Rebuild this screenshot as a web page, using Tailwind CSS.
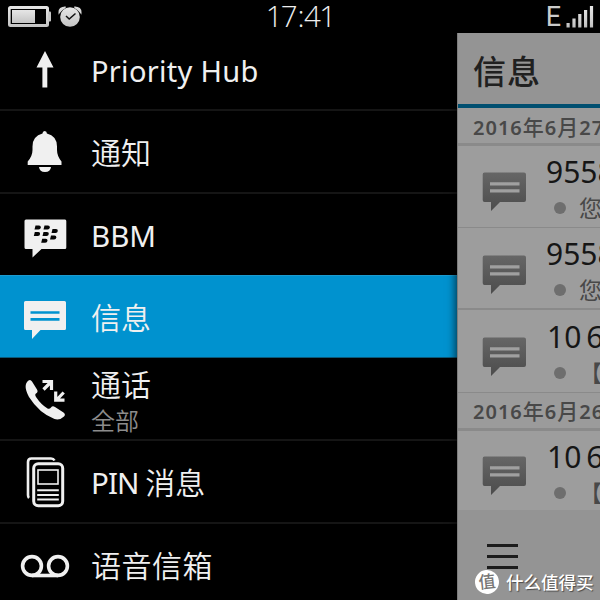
<!DOCTYPE html>
<html lang="zh-CN">
<head>
<meta charset="utf-8">
<title>信息</title>
<script src="https://cdn.jsdelivr.net/npm/@tailwindcss/browser@4"></script>
</head>
<body class="w-[600px] h-[600px] overflow-hidden bg-black font-['Noto_Sans','Noto_Sans_CJK_SC',sans-serif] text-[#f0f0f0]">
<svg class="absolute w-0 h-0">
  <defs>
    <linearGradient id="gray" x1="0" y1="0" x2="0" y2="1"><stop offset="0" stop-color="#666"/><stop offset="1" stop-color="#4c4c4c"/></linearGradient>
    <linearGradient id="silver" x1="0" y1="0" x2="0" y2="1"><stop offset="0" stop-color="#e6e6e6"/><stop offset="1" stop-color="#c4c4c4"/></linearGradient>
  </defs>
</svg>
<div class="relative flex flex-col w-[600px] h-[600px] overflow-hidden">
  <header class="h-[33px] shrink-0 grid grid-cols-3 items-start">
    <svg width="90" height="33" viewBox="0 0 90 33">
      <rect x="8" y="6" width="41" height="21" rx="2.5" fill="url(#silver)"/>
      <rect x="48" y="11.500" width="3" height="10" rx="1" fill="#c8c8c8"/>
      <rect x="10.700" y="9" width="35.300" height="15" fill="#000"/>
      <rect x="12" y="10" width="23" height="13" fill="url(#silver)"/>
      <path d="M59.200 12.500Q58.800 7.500 65.500 7.200Q61.500 9 59.200 12.500zM80.800 12.500Q81.200 7.500 74.500 7.200Q78.500 9 80.800 12.500z" fill="#d8d8d8" stroke="#d8d8d8" stroke-width="1.500"/>
      <circle cx="70" cy="17" r="9.800" fill="url(#silver)"/>
      <path d="M66 16l3.200 3 6.300-5.500" fill="none" stroke="#111" stroke-width="1.500"/>
    </svg>
    <div class="text-center font-['Open_Sans','Noto_Sans',sans-serif] font-light text-[29.500px] leading-[32px] tracking-[-1.800px] text-[#eee]">17<span class="px-[1.500px]">:</span>41</div>
    <div class="flex justify-end gap-[5px] pr-[6px]">
      <span class="font-['Roboto',sans-serif] text-[27px] leading-[33px] pt-px text-[#ccc]">E</span>
      <svg width="28" height="33" viewBox="0 0 28 33" fill="url(#silver)">
        <path d="M.5 23h3.200v4.500H.500zM6.400 18.500h3.200v9H6.400zM12.200 14h3.200v13.500h-3.200zM18 10h3.200v17.500H18zM23.900 6h3.200v21.500h-3.200z"/>
      </svg>
    </div>
  </header>

  <main class="flex flex-1 min-h-0">
    <nav class="w-[457px] shrink-0 flex flex-col text-[30px] leading-[40px] font-[350] overflow-hidden">
      <div class="h-[78px] shrink-0 flex items-center border-b-2 border-[#151515]">
        <svg class="shrink-0" width="91" height="76" viewBox="0 33 91 76"><path d="M45 51l8.500 16.500H47.300V87.500H42.400V67.500H36.500z" fill="#f0f0f0"/></svg>
        <span class="text-[29px] font-normal tracking-[0.3px]">Priority Hub</span>
      </div>
      <div class="h-[83px] shrink-0 flex items-center border-b-2 border-[#151515]">
        <svg class="shrink-0" width="91" height="81" viewBox="0 111 91 81"><path fill="#f0f0f0" d="M42.500 133.500q0-2.500 2.200-2.500t2.200 2.500Q57 136 57 146.500V150Q57 156 61.500 161.500V165H27.700V161.500Q32.500 156 32.500 150V146.500Q32.500 136 42.500 133.500zM39 167H51Q50.500 172 45 172T39 167z"/></svg>
        <span class="pt-[2px]">通知</span>
      </div>
      <div class="h-[81px] shrink-0 flex items-center">
        <svg class="shrink-0" width="91" height="81" viewBox="0 194 91 81"><path fill="#f0f0f0" d="M26 219.500H65Q66.300 219.500 66.300 221V247.500Q66.300 249 65 249H41.500L32.500 257.500V249H26Q24.500 249 24.500 247.500V221Q24.500 219.500 26 219.500z"/>
          <g fill="#050505"><path id="b" d="M35.500 225.500H39Q41 225.500 40.800 227.500T38.500 229.500H34.500z"/><use href="#b" x="9"/><use href="#b" x="-.7" y="6.500"/><use href="#b" x="8" y="6.500"/><use href="#b" x="17" y="3.500"/><use href="#b" x="15.500" y="10"/><use href="#b" x="6.700" y="13.200"/></g></svg>
        <span class="text-[29.500px] font-normal pt-[2px]">BBM</span>
      </div>
      <div class="h-[83px] shrink-0 flex items-center bg-[#0092cf] border-t border-b border-t-[#1c9bd0] border-b-[#0b5878]">
        <svg class="shrink-0" width="91" height="81" viewBox="0 276 91 81"><path fill="#f0f0f0" d="M25.500 301H64.500Q66 301 66 302.500V328.500Q66 330 64.500 330H40.500L32 339V330H25.500Q24 330 24 328.500V302.500Q24 301 25.500 301z"/><path d="M30.500 312.500H59.500M30.500 319.300H59.500" stroke="#0092cf" stroke-width="2.700"/></svg>
        <span class="pt-[2px]">信息</span>
      </div>
      <div class="h-[83px] shrink-0 flex items-center border-b-2 border-[#151515]">
        <svg class="shrink-0" width="91" height="81" viewBox="0 358 91 81">
          <path fill="#f0f0f0" d="M28.500 380.500Q30.500 379 32 381.500L37 389.500Q38.500 392 36 393.500Q34.500 394.500 36 397Q41 404.500 47.500 408.500Q49.500 409.500 51 407.500Q52.500 405.500 55 407L63.500 412.500Q66 414.500 64 416.500Q60 420.500 54.500 419Q39 413 29 397Q22.500 385 28.500 380.500z"/>
          <path d="M43.500 389.500L51 382M42.500 381.500H51.500V390M63.700 392.500L56.500 400M55.700 391.500V400.200H64.500" fill="none" stroke="#f0f0f0" stroke-width="3.200"/>
        </svg>
        <div class="flex flex-col pt-[4px]"><span class="leading-[39px]">通话</span><span class="text-[24px] leading-[33px] text-[#8c8c8c]">全部</span></div>
      </div>
      <div class="h-[83px] shrink-0 flex items-center border-b-2 border-[#151515]">
        <svg class="shrink-0" width="91" height="81" viewBox="0 441 91 81" fill="none" stroke="#f0f0f0">
          <path d="M29 498Q28 497 28 495V462Q28 458.500 31.500 458.500H51Q53.500 458.500 54.500 460.500" stroke-width="2.600"/>
          <rect x="33.700" y="463.700" width="29" height="42" rx="4.500" stroke-width="3"/>
          <rect x="38" y="470" width="20" height="14" stroke-width="1.600"/>
          <path d="M37.200 490.200H58.800M37.200 495H58.800M37.200 499.500H58.800" stroke-width="2"/>
        </svg>
        <span class="pt-[2px]"><span class="text-[29.500px] font-normal tracking-[-0.9px]">PIN </span>消息</span>
      </div>
      <div class="h-[83px] shrink-0 flex items-center">
        <svg class="shrink-0" width="91" height="81" viewBox="0 524.500 91 81" fill="none" stroke="#f0f0f0" stroke-width="3.600"><circle cx="32" cy="565.500" r="9.400"/><circle cx="58" cy="565.500" r="9.400"/><path d="M32 575H58"/></svg>
        <span class="tracking-[0.5px]">语音信箱</span>
      </div>
    </nav>

    <section class="relative w-[143px] flex flex-col bg-[#9d9d9d] overflow-hidden whitespace-nowrap border-l border-[#7d7d7d] shadow-[-2px_0_8px_rgba(0,0,0,0.6)]">
      <h1 class="h-[71px] shrink-0 bg-[#949494] pl-[15px] pt-[2px] text-[33px] leading-[73px] tracking-[1px] font-medium text-[#202020]">信息</h1>
      <div class="h-[4px] shrink-0 bg-[#004f70]"></div>
      <div class="h-[38px] shrink-0 pl-[15px] border-b-3 border-[#8a8a8a] bg-[#9b9b9b] text-[20px] leading-[38px] tracking-[1px] font-semibold text-[#484848]">2016<span class="font-medium text-[21px]">年</span>6<span class="font-medium text-[21px]">月</span>27</div>

      <div class="h-[82px] shrink-0 flex border-b border-[#8a8a8a]">
        <svg class="ml-[24px] mt-[25px] shrink-0" width="46" height="42" viewBox="0 0 46 42"><path id="chat" fill="url(#gray)" d="M2.500 1.500H42Q44 1.500 44 3.500V29Q44 31 42 31H18L9 40V31H2.500Q.7 31 .7 29V3.500Q.7 1.500 2.500 1.500z"/><path d="M8 12.800H37.500M8 19.800H37.500" stroke="#a0a0a0" stroke-width="3.200"/></svg>
        <div class="ml-[18px] flex flex-col pt-[5px]">
          <span class="text-[30px] leading-[42px] text-[#161616]">9558</span>
          <div class="flex items-center h-[30px]"><i class="w-[12px] h-[12px] rounded-full bg-[#6e6e6e] ml-[8px] mr-[13px]"></i><span class="text-[23px] leading-[30px] text-[#484848]">您</span></div>
        </div>
      </div>
      <div class="h-[82px] shrink-0 flex border-b-2 border-[#8a8a8a]">
        <svg class="ml-[24px] mt-[26px] shrink-0" width="46" height="42" viewBox="0 0 46 42"><use href="#chat"/><path d="M8 12.800H37.500M8 19.800H37.500" stroke="#a0a0a0" stroke-width="3.200"/></svg>
        <div class="ml-[18px] flex flex-col pt-[5px]">
          <span class="text-[30px] leading-[42px] text-[#161616]">9558</span>
          <div class="flex items-center h-[30px]"><i class="w-[12px] h-[12px] rounded-full bg-[#6e6e6e] ml-[8px] mr-[13px]"></i><span class="text-[23px] leading-[30px] text-[#484848]">您</span></div>
        </div>
      </div>
      <div class="h-[83px] shrink-0 flex border-b border-[#8a8a8a]">
        <svg class="ml-[24px] mt-[26px] shrink-0" width="46" height="42" viewBox="0 0 46 42"><use href="#chat"/><path d="M8 12.800H37.500M8 19.800H37.500" stroke="#a0a0a0" stroke-width="3.200"/></svg>
        <div class="ml-[17px] flex flex-col pt-[6px]">
          <span class="text-[30px] leading-[42px] text-[#161616] pl-[2px]">10<span class="pl-[5px]">6</span></span>
          <div class="flex items-center h-[30px]"><i class="w-[12px] h-[12px] rounded-full bg-[#6e6e6e] ml-[9px] mr-[13px]"></i><span class="text-[23px] leading-[30px] text-[#484848]">【</span></div>
        </div>
      </div>
      <div class="h-[38px] shrink-0 pl-[15px] border-b-3 border-[#8a8a8a] bg-[#9b9b9b] text-[20px] leading-[37px] tracking-[1px] font-semibold text-[#484848]">2016<span class="font-medium text-[21px]">年</span>6<span class="font-medium text-[21px]">月</span>26</div>
      <div class="h-[79px] shrink-0 flex">
        <svg class="ml-[24px] mt-[24px] shrink-0" width="46" height="42" viewBox="0 0 46 42"><use href="#chat"/><path d="M8 12.800H37.500M8 19.800H37.500" stroke="#a0a0a0" stroke-width="3.200"/></svg>
        <div class="ml-[17px] flex flex-col pt-[5px]">
          <span class="text-[30px] leading-[42px] text-[#161616] pl-[2px]">10<span class="pl-[5px]">6</span></span>
          <div class="flex items-center h-[30px]"><i class="w-[12px] h-[12px] rounded-full bg-[#6e6e6e] ml-[9px] mr-[13px]"></i><span class="text-[23px] leading-[30px] text-[#484848]">【</span></div>
        </div>
      </div>
      <footer class="flex-1 bg-[#949494] pl-[29px] pt-[34px] flex flex-col gap-[8px]">
        <i class="w-[31px] h-[3px] bg-[#1c1c1c]"></i><i class="w-[31px] h-[3px] bg-[#1c1c1c]"></i><i class="w-[31px] h-[3px] bg-[#1c1c1c]"></i>
      </footer>
    </section>
  </main>

  <div class="absolute left-[475px] top-[570px] flex items-center gap-[7px] whitespace-nowrap text-white">
    <span class="w-[24px] h-[24px] rounded-full bg-white text-[#777] text-[17px] leading-[23px] text-center font-medium -rotate-6">值</span>
    <span class="text-[17.500px] leading-[24px] font-medium [text-shadow:1px_1px_1px_rgba(0,0,0,0.5)]">什么值得买</span>
  </div>
</div>
</body>
</html>
